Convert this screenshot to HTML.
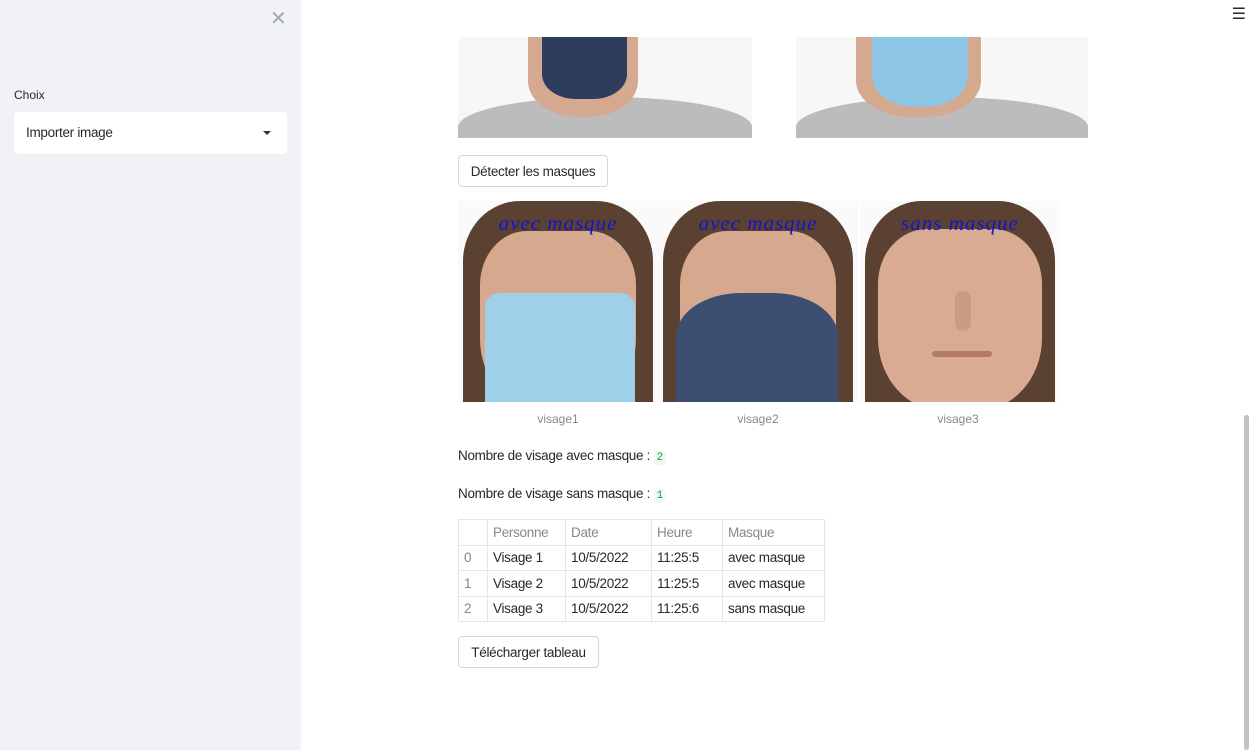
<!DOCTYPE html>
<html><head><meta charset="utf-8"><style>
*{box-sizing:border-box;margin:0;padding:0}
body{width:1250px;height:750px;overflow:hidden;background:#fff;font-family:"Liberation Sans",sans-serif;color:#262730;position:relative}
.side{position:absolute;left:0;top:0;width:301px;height:750px;background:#f0f2f6}
.abs{position:absolute}
.btn{position:absolute;border:1px solid #d5d6da;border-radius:4px;background:#fff;font-size:13.5px;letter-spacing:-0.3px;display:flex;align-items:center;justify-content:center}
.face{position:absolute;width:200px;height:201px;overflow:hidden;background:#fafafa}
.lbl{position:absolute;font-size:12px;color:#888;width:200px;text-align:center}
.code{font-family:"Liberation Mono",monospace;font-size:11px;color:#09ab3b;background:#f5f5f5;padding:1px 3px;border-radius:3px}
.t{font-size:13.5px;letter-spacing:-0.3px}
table{position:absolute;left:458px;top:519px;border-collapse:collapse;font-size:13.5px;letter-spacing:-0.3px}
td,th{border:1px solid #e6e6e6;height:25.5px;padding:0 5px;text-align:left;font-weight:normal}
th,td.i{color:#888}
.cap{position:absolute;font-family:"Liberation Serif",serif;font-style:italic;color:#1515c8;font-size:21px;top:10px;width:200px;text-align:center;letter-spacing:1px}
</style></head><body>
<div class="side">
 <div class="abs" style="left:270px;top:6px;font-size:20px;color:#a3a8b4">✕</div>
 <div class="abs" style="left:14px;top:88px;font-size:12px">Choix</div>
 <div class="abs t" style="left:14px;top:112px;width:273px;height:42px;background:#fff;border-radius:4px;padding:13px 12px">Importer image<span style="position:absolute;right:16px;top:19px;border:4px solid transparent;border-top-color:#333;border-bottom:0"></span></div>
</div>
<div class="abs" style="right:4px;top:4px;font-size:16px">☰</div>
<div class="abs" style="left:1244px;top:415px;width:5px;height:335px;background:#c1c1c1;border-radius:3px"></div>

<div class="abs" style="left:458px;top:37px;width:294px;height:101px;background:#f7f7f7;overflow:hidden">
 <div class="abs" style="left:0;top:60px;width:294px;height:60px;background:#bcbcbc;border-radius:50% 50% 0 0"></div>
 <div class="abs" style="left:70px;top:0;width:110px;height:80px;background:#d4a990;border-radius:0 0 45% 45%"></div>
 <div class="abs" style="left:84px;top:0;width:85px;height:62px;background:#2e3d5c;border-radius:0 0 40% 40%"></div>
</div>
<div class="abs" style="left:796px;top:37px;width:292px;height:101px;background:#f7f7f7;overflow:hidden">
 <div class="abs" style="left:0;top:60px;width:292px;height:60px;background:#bcbcbc;border-radius:50% 50% 0 0"></div>
 <div class="abs" style="left:60px;top:0;width:125px;height:80px;background:#d4a990;border-radius:0 0 45% 45%"></div>
 <div class="abs" style="left:76px;top:0;width:96px;height:70px;background:#8ec6e6;border-radius:0 0 45% 45%"></div>
</div>
<div class="btn" style="left:458px;top:155px;width:150px;height:32px">Détecter les masques</div>

<div class="face" style="left:458px;top:201px">
 <div class="abs" style="left:5px;top:0;width:190px;height:201px;background:#5a4132;border-radius:30% 30% 0 0"></div>
 <div class="abs" style="left:22px;top:30px;width:156px;height:180px;background:#d6a98e;border-radius:30% 30% 40% 40%"></div>
 <div class="abs" style="left:27px;top:92px;width:150px;height:109px;background:#9fd0ea;border-radius:14px 14px 0 0"></div>
 <div class="cap">avec masque</div>
</div>
<div class="face" style="left:658px;top:201px">
 <div class="abs" style="left:5px;top:0;width:190px;height:201px;background:#5a4132;border-radius:30% 30% 0 0"></div>
 <div class="abs" style="left:22px;top:30px;width:156px;height:180px;background:#d6a98e;border-radius:30% 30% 40% 40%"></div>
 <div class="abs" style="left:18px;top:92px;width:162px;height:109px;background:#3d4f70;border-radius:40% 40% 0 0"></div>
 <div class="cap">avec masque</div>
</div>
<div class="face" style="left:860px;top:201px">
 <div class="abs" style="left:5px;top:0;width:190px;height:201px;background:#5a4132;border-radius:30% 30% 0 0"></div>
 <div class="abs" style="left:18px;top:28px;width:164px;height:182px;background:#d8ab92;border-radius:30% 30% 40% 40%"></div>
 <div class="abs" style="left:95px;top:90px;width:16px;height:40px;background:#c99b82;border-radius:8px"></div>
 <div class="abs" style="left:72px;top:150px;width:60px;height:6px;background:#b27a6a;border-radius:3px"></div>
 <div class="cap">sans masque</div>
</div>
<div class="lbl" style="left:458px;top:412px">visage1</div>
<div class="lbl" style="left:658px;top:412px">visage2</div>
<div class="lbl" style="left:858px;top:412px">visage3</div>

<div class="abs t" style="left:458px;top:448px">Nombre de visage avec masque : <span class="code">2</span></div>
<div class="abs t" style="left:458px;top:486px">Nombre de visage sans masque : <span class="code">1</span></div>

<table>
<tr><th style="width:29px"></th><th style="width:78px">Personne</th><th style="width:86px">Date</th><th style="width:71px">Heure</th><th style="width:102px">Masque</th></tr>
<tr><td class="i">0</td><td>Visage 1</td><td>10/5/2022</td><td>11:25:5</td><td>avec masque</td></tr>
<tr><td class="i">1</td><td>Visage 2</td><td>10/5/2022</td><td>11:25:5</td><td>avec masque</td></tr>
<tr><td class="i">2</td><td>Visage 3</td><td>10/5/2022</td><td>11:25:6</td><td>sans masque</td></tr>
</table>
<div class="btn" style="left:458px;top:636px;width:141px;height:32px">Télécharger tableau</div>
</body></html>
